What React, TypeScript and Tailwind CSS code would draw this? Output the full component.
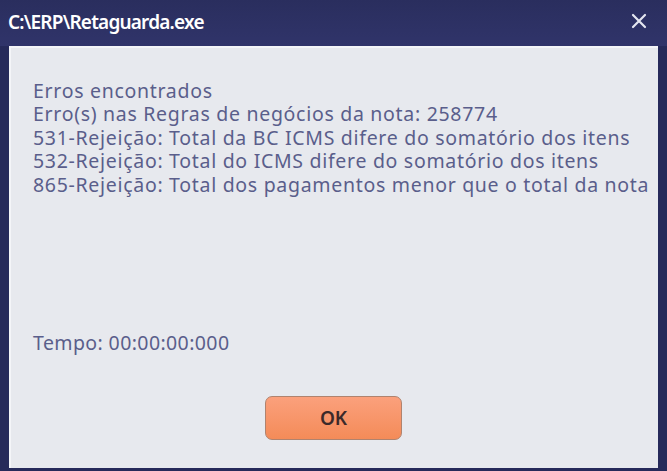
import React from "react";

export default function App() {
  const lines = [
    "Erros encontrados",
    "Erro(s) nas Regras de negócios da nota: 258774",
    "531-Rejeição: Total da BC ICMS difere do somatório dos itens",
    "532-Rejeição: Total do ICMS difere do somatório dos itens",
    "865-Rejeição: Total dos pagamentos menor que o total da nota",
  ];
  return (
    <div
      className="w-[667px] h-[471px] flex flex-col bg-[#262a5a] overflow-hidden"
      style={{ fontFamily: '"Noto Sans", "Open Sans", sans-serif' }}
    >
      <div className="h-[46px] flex items-center justify-between pl-[8px] pr-[20px] bg-gradient-to-b from-[#2a2e5e] to-[#30346a]">
        <span className="text-white text-[19px] font-semibold tracking-[-0.8px] leading-none -mt-[2px]">
          C:\ERP\Retaguarda.exe
        </span>
        <svg width="16" height="16" viewBox="0 0 16 16" className="-mt-[4px]">
          <path d="M2 2 L14 14 M14 2 L2 14" stroke="#e4e6f0" strokeWidth="2.2" strokeLinecap="round" />
        </svg>
      </div>
      <div className="flex-1 flex px-[9px] pb-[3px]">
        <div className="flex-1 bg-[#e7e9ee] border-l-2 border-t-2 border-[#f4f5f8] flex flex-col">
          <div className="pl-[22px] pt-[31px] text-[#5a5e8b] text-[19.5px] leading-[23.4px] tracking-[0.7px]">
            {lines.map((l) => (
              <div key={l}>{l}</div>
            ))}
          </div>
          <div className="pl-[22px] mt-[135px] text-[#5a5e8b] text-[19.5px] leading-[23.4px] tracking-[0.4px]">
            Tempo: 00:00:00:000
          </div>
          <div className="flex justify-start pl-[254px] mt-[42px]">
            <button className="w-[137px] h-[44px] rounded-[7px] border border-[#b0836e] bg-gradient-to-b from-[#fba07c] to-[#f48b58] text-[#3b2a2a] text-[19px] font-semibold">
              OK
            </button>
          </div>
        </div>
      </div>
    </div>
  );
}
